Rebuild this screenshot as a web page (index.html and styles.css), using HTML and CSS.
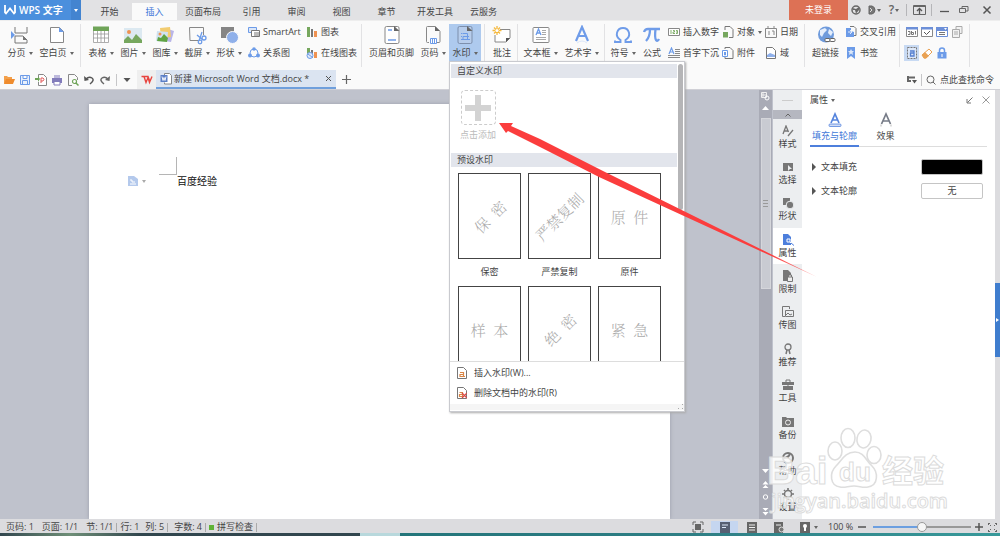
FILE: index.html
```
<!DOCTYPE html>
<html lang="zh-CN">
<head>
<meta charset="utf-8">
<title>WPS 文字</title>
<link rel="stylesheet" href="styles.css">
</head>
<body>
<div class="app">
  <header class="titlebar">
    <button class="brand">
      <svg width="12" height="10" viewBox="0 0 12 10"><path d="M1 0v7.500l1 1L6 3.500l4 5 1-1V0" fill="none" stroke="#fff" stroke-width="1.800"/></svg>
      <span class="brand-name">WPS 文字</span>
      <span class="brand-drop"><i class="caret"></i></span>
    </button>
    <nav class="tabs">
      <button class="tab">开始</button>
      <button class="tab active">插入</button>
      <button class="tab wide">页面布局</button>
      <button class="tab">引用</button>
      <button class="tab">审阅</button>
      <button class="tab">视图</button>
      <button class="tab">章节</button>
      <button class="tab wide">开发工具</button>
      <button class="tab">云服务</button>
    </nav>
    <div class="window-tools">
      <button class="login">未登录</button>
      <button class="wt" aria-label="皮肤"><svg width="10" height="10" viewBox="0 0 10 10"><circle cx="5" cy="5" r="4" fill="none" stroke="#666" stroke-width="1.500"/><path d="M1.500 3l3.500 1 3-2v3L5 8.500 4 5 2 5z" fill="#666"/></svg></button>
      <button class="wt" aria-label="文档"><svg width="8" height="10" viewBox="0 0 8 10"><path d="M1 1h3q3 1 3 4t-3 4H1z" fill="#777" stroke="#666"/><path d="M2 3l2 2-2 2" stroke="#ddd" fill="none"/></svg><i class="caret"></i></button>
      <button class="wt help">?<i class="caret"></i></button>
      <i class="bar"></i>
      <button class="wt" aria-label="收起功能区"><svg width="13" height="12" viewBox="0 0 13 12"><path d="M.5 10.500V1.500h12v9zM.5 2.500h12" fill="none" stroke="#666"/><path d="M6.500 10V5M4 7l2.500-2.500L9 7" fill="none" stroke="#555" stroke-width="1.300"/></svg></button>
      <i class="bar"></i>
      <button class="wt" aria-label="最小化"><svg width="10" height="10" viewBox="0 0 10 10"><path d="M1 6.500h9" stroke="#555" stroke-width="1.300"/></svg></button>
      <button class="wt" aria-label="还原"><svg width="10" height="10" viewBox="0 0 10 10"><path d="M.5 3.500h6v4h-6zM3 3V1.500h6V6H7" fill="none" stroke="#666"/></svg></button>
      <button class="wt close" aria-label="关闭"><svg width="10" height="10" viewBox="0 0 10 10"><path d="M1.500 1.500l7 7M8.500 1.500l-7 7" stroke="#555" stroke-width="1.500"/></svg></button>
    </div>
  </header>

  <section class="ribbon">
    <button class="big"><svg width="20" height="20" viewBox="0 0 20 20"><path d="M5 2v6h12V2M5 18v-7h8l4 4v3z" fill="none" stroke="#777"/><path d="M13 11v4h4z" fill="#777"/><path d="M1 6l4 4-4 4z" fill="#6c9be8"/></svg><span>分页<i class="caret"></i></span></button>
    <button class="big b3"><svg width="20" height="20" viewBox="0 0 20 20"><path d="M3.500 2.500h9l4 4v11h-13z" fill="#fff" stroke="#888"/><path d="M12 2l5 5h-5z" fill="#6c9be8"/></svg><span>空白页<i class="caret"></i></span></button>
    <i class="sep"></i>
    <button class="big"><svg width="20" height="20" viewBox="0 0 20 20"><path d="M2.500 5h15v12.500h-15zM2 9h16M2 13h16M6.500 5v12M10 5v12M13.500 5v12" fill="#fff" stroke="#999" stroke-width=".8"/><path d="M2 1.500h16V6H2z" fill="#6fa458"/></svg><span>表格<i class="caret"></i></span></button>
    <button class="big"><svg width="20" height="20" viewBox="0 0 20 20"><path d="M1 3h18v15H1z" fill="#dce9f1"/><circle cx="6" cy="7" r="2" fill="#ef9252"/><path d="M1 18v-3l4-4 4 4 4-6 6 6v3z" fill="#76a75e"/></svg><span>图片<i class="caret"></i></span></button>
    <button class="big"><svg width="20" height="20" viewBox="0 0 20 20"><path d="M13 4l6 2-3 11-6-1z" fill="#b9b5e8"/><path d="M5 3l10-1 1 10-10 1z" fill="#f2cc70"/><path d="M2 6l11 1-1 10-11-1z" fill="#cfe2f2"/><circle cx="5" cy="9" r="1.500" fill="#ef9252"/><path d="M2 16l1-4 3 1 3-4 4 4-1 4z" fill="#60a443"/></svg><span>图库<i class="caret"></i></span></button>
    <button class="big"><svg width="20" height="20" viewBox="0 0 20 20"><path d="M11 15.500H3L2.500 2.500h14V10" fill="none" stroke="#888"/><path d="M10 10l6 5M12 16l3-9" stroke="#6c9be8" stroke-width="1.300"/><circle cx="17" cy="13" r="2" fill="none" stroke="#6c9be8" stroke-width="1.300"/><circle cx="13" cy="17" r="1.800" fill="none" stroke="#6c9be8" stroke-width="1.300"/></svg><span>截屏<i class="caret"></i></span></button>
    <button class="big"><svg width="20" height="20" viewBox="0 0 20 20"><path d="M2 2h13v11H2z" fill="#858585"/><circle cx="13.500" cy="12.500" r="6" fill="#8fb0ea" stroke="#fafafa"/></svg><span>形状<i class="caret"></i></span></button>
    <div class="stack s-smart">
      <button><svg width="12" height="12" viewBox="0 0 12 12"><path d="M.5 1.500h8v5h-8z" fill="#dce7f8" stroke="#6c9be8"/><path d="M3.500 4.500h8v6h-8zM6 7h5M6 9h5" fill="#fff" stroke="#777"/></svg>SmartArt</button>
      <button><svg width="12" height="12" viewBox="0 0 12 12"><circle cx="6" cy="6" r="4" fill="none" stroke="#6c9be8"/><g fill="#6c9be8"><circle cx="6" cy="2" r="1.800"/><circle cx="2" cy="8.500" r="2"/><circle cx="10" cy="8.500" r="2"/></g></svg>关系图</button>
    </div>
    <div class="stack s-chart">
      <button><svg width="12" height="12" viewBox="0 0 12 12"><path d="M1 1h3v10H1z" fill="#76a75e"/><path d="M5 3h2v8H5z" fill="#777"/><path d="M8 5h3v6H8z" fill="#ef9252"/></svg>图表</button>
      <button><svg width="12" height="12" viewBox="0 0 12 12"><path d="M1 1h3v8H1z" fill="#76a75e"/><path d="M5 3h2v8H5z" fill="#777"/><path d="M8 5h3v6H8z" fill="#ef9252"/><circle cx="4" cy="8.500" r="3" fill="#dce7f8" stroke="#6c9be8"/><path d="M2 7l4 3" stroke="#6c9be8"/></svg>在线图表</button>
    </div>
    <i class="sep"></i>
    <button class="big b5"><svg width="20" height="20" viewBox="0 0 20 20"><rect x="3" y="1.500" width="14" height="17" rx="1.500" fill="#fff" stroke="#888"/><path d="M12 1l5.500 5H12z" fill="#666"/><path d="M6 5h4M6 15h8" stroke="#6c9be8" stroke-width="1.500"/></svg><span>页眉和页脚</span></button>
    <button class="big"><svg width="20" height="20" viewBox="0 0 20 20"><path d="M6 17.500H4.500q-1 0-1-1v-14q0-1 1-1H12l5 5v10q0 1-1 1h-2" fill="none" stroke="#888"/><path d="M12 1l5 5h-5z" fill="#666"/><path d="M7.500 13.500h6v5h-6zM9.500 14v4M11.500 14v4" fill="#fff" stroke="#6c9be8"/></svg><span>页码<i class="caret"></i></span></button>
    <button class="big on"><svg width="20" height="20" viewBox="0 0 20 20"><rect x="3" y="1.500" width="14" height="17" rx="1.500" fill="#b7cdec" stroke="#7d8fac"/><path d="M12 1l5.500 5H12z" fill="#666"/><path d="M7.500 8.500h5v6H8v-3h4M6 8.500h1M6 11.500h1M12 11.500h2M6 14.500h9" fill="none" stroke="#6c9be8"/></svg><span>水印<i class="caret"></i></span></button>
    <i class="sep"></i>
    <button class="big b2"><svg width="20" height="20" viewBox="0 0 20 20"><path d="M8 4.500h10V13l-4 4H3V10" fill="#fff" stroke="#888"/><path d="M18 13h-4v4z" fill="#555"/><path d="M5 1v9M.5 5.500h9M2 2.500l6 6M8 2.500l-6 6" stroke="#f5b93f" stroke-width="1.300"/><circle cx="5" cy="5.500" r="1.600" fill="#fff"/></svg><span>批注</span></button>
    <i class="sep tight"></i>
    <button class="big b3"><svg width="20" height="20" viewBox="0 0 20 20"><rect x="2" y="2.500" width="16" height="15" rx="1" fill="#fff" stroke="#888"/><path d="M5 10l2.500-6L10 10M6 8h3" fill="none" stroke="#6c9be8" stroke-width="1.300"/><path d="M11 5.500h4M11 7.500h4M11 9.500h4M5 12.500h10M5 14.500h10" stroke="#aaa"/></svg><span>文本框<i class="caret"></i></span></button>
    <button class="big b3"><svg width="20" height="20" viewBox="0 0 20 20"><path d="M4 16L10 2l6 14M6.500 11h7" fill="none" stroke="#6f9ce9" stroke-width="2.200"/><path d="M5 18q5-4 10 0" stroke="#dbe6f8" fill="none"/></svg><span>艺术字<i class="caret"></i></span></button>
    <i class="sep tight"></i>
    <button class="big"><svg width="20" height="20" viewBox="0 0 20 20"><path d="M2 15.500v1.500h5.500v-2C1 11 4 3 10 3s9 8 2.500 12v2H18v-1.500" fill="none" stroke="#6f9ce9" stroke-width="1.900"/></svg><span>符号<i class="caret"></i></span></button>
    <button class="big b2"><svg width="20" height="20" viewBox="0 0 20 20"><path d="M2 7q1-3 4-3h12M8 4q0 8-4 12M13.500 4q-1 9 .5 11t3-1" fill="none" stroke="#6f9ce9" stroke-width="2.300"/></svg><span>公式</span></button>
    <div class="stack s-num">
      <button><svg width="12" height="12" viewBox="0 0 12 12"><path d="M.5 2.500h11v7H.5z" fill="#fff" stroke="#888"/><path d="M3 4v4M5 4.500h1.500v1.500H5v1.500h2M8 4.500h1.500v3H8M8 6h1.500" fill="none" stroke="#76a75e" stroke-width=".9"/></svg>插入数字</button>
      <button><svg width="12" height="12" viewBox="0 0 12 12"><path d="M1 7l2.500-6L6 7M2 5h3" fill="none" stroke="#6c9be8" stroke-width="1.200"/><path d="M7 2.500h5M7 4.500h5M7 6.500h5M0 8.500h12M0 10.500h12" stroke="#888"/></svg>首字下沉</button>
    </div>
    <div class="stack s-obj">
      <button><svg width="12" height="12" viewBox="0 0 12 12"><path d="M3 4V.5h5l3 3v8H7" fill="none" stroke="#777"/><path d="M1 6h5v5.500H1z" fill="#76a75e"/></svg>对象<i class="caret"></i></button>
      <button><svg width="12" height="12" viewBox="0 0 12 12"><path d="M3 2V.5h5l3 3v8H3V10" fill="none" stroke="#777"/><path d="M.5 3.500h5v6h-5z" fill="#fff" stroke="#6c9be8"/><path d="M2.500 5v3h1V5" fill="none" stroke="#6c9be8"/></svg>附件</button>
    </div>
    <div class="stack s-date">
      <button><svg width="12" height="12" viewBox="0 0 12 12"><path d="M.5 2.500h11v9H.5zM3 0v3M9 0v3M4 5v4M7 5h2v4" fill="none" stroke="#888"/></svg>日期</button>
      <button><svg width="12" height="12" viewBox="0 0 12 12"><path d="M1.500.5h6l3 3v8h-9z" fill="#fff" stroke="#777"/><path d="M2 8l3-2 5 2v2H2z" fill="#8fb0ea"/></svg>域</button>
    </div>
    <i class="sep"></i>
    <button class="big b-link"><svg width="20" height="20" viewBox="0 0 20 20"><circle cx="10" cy="9.500" r="8" fill="#6f9bdc"/><path d="M4 5l5-2 2 2-3 3-2 4-2-2zM13 4l4 3-2 4-3-3z" fill="#e5eefb"/><rect x="9" y="13.500" width="5" height="3" rx="1" fill="#fff" stroke="#666"/><rect x="14" y="13.500" width="5" height="3" rx="1" fill="#fff" stroke="#666"/></svg><span>超链接</span></button>
    <div class="stack s-ref">
      <button><svg width="12" height="12" viewBox="0 0 12 12"><path d="M5 .5h4l2 2v7H8" fill="none" stroke="#777"/><path d="M1 2h5v3l3 1v5H1z" fill="#6c9be8"/><path d="M3 6h3M5 4l2 2-2 2" stroke="#fff" fill="none" stroke-width=".8"/></svg>交叉引用</button>
      <button><svg width="12" height="12" viewBox="0 0 12 12"><path d="M2 0h8v12L6 9l-4 3z" fill="#6c9be8"/><path d="M6 2l1 2h2L7.500 5.500 8 8 6 6.500 4 8l.5-2.500L3 4h2z" fill="#dce7f8"/></svg>书签</button>
    </div>
    <i class="sep"></i>
    <div class="controls">
      <button aria-label="文字型窗体域"><svg width="12" height="12" viewBox="0 0 12 12"><path d="M.5 1.500h11v9H.5z" fill="#fff" stroke="#888"/><path d="M0 1h12v2.500H0z" fill="#6c8fd8"/><path d="M2 5.500h2v3H2M5.500 5v3.500h2v-2h-2M9.500 5v3.500" fill="none" stroke="#777"/></svg></button>
      <button aria-label="复选框型窗体域"><svg width="12" height="12" viewBox="0 0 12 12"><path d="M.5 1.500h11v9H.5z" fill="#fff" stroke="#888"/><path d="M0 1h12v2.500H0z" fill="#6c8fd8"/><path d="M3 6l2.500 2.500L9 5" fill="none" stroke="#555"/></svg></button>
      <button aria-label="下拉型窗体域"><svg width="12" height="12" viewBox="0 0 12 12"><path d="M.5 1.500h11v9H.5z" fill="#fff" stroke="#6c8fd8"/><path d="M0 1h12v4H0z" fill="#6c8fd8"/><path d="M8 2h3L9.500 4z" fill="#fff"/><path d="M3 6.500h6M3 8.500h6" stroke="#777"/></svg></button>
      <button aria-label="窗体域选项"><svg width="12" height="12" viewBox="0 0 12 12"><path d="M1.500 3.500h7v8h-7zM5 3V.5h6v7H9M3 6h4M3 8h4" fill="#f2f2f2" stroke="#aaa"/></svg></button>
      <button class="on" aria-label="窗体域底纹"><svg width="12" height="12" viewBox="0 0 12 12"><path d="M1.500.5h9v11h-9z" fill="#dce7f8" stroke="#777" stroke-dasharray="2 1"/><path d="M4 4h4v5H4.500V6H8" fill="none" stroke="#5680d0" stroke-width="1.300"/></svg></button>
      <button aria-label="重新设置窗体域"><svg width="12" height="12" viewBox="0 0 12 12"><path d="M1 8l7-6 3 3-6 6H3z" fill="#fff" stroke="#e9a153"/><path d="M1 8l3-3 4 4-3 2.500H3z" fill="#e9a153"/></svg></button>
      <button aria-label="保护窗体"><svg width="12" height="12" viewBox="0 0 12 12"><path d="M3.500 6V3.500q0-2.500 2.500-2.500t2.500 2.500V6" fill="none" stroke="#6c9be8" stroke-width="1.500"/><path d="M1.500 5h9v6.500h-9z" fill="#6c9be8"/><path d="M6 7v3" stroke="#fff"/></svg></button>
    </div>
    <i class="sep"></i>
  </section>

  <section class="quickbar">
    <div class="quick">
      <button aria-label="打开"><svg width="12" height="12" viewBox="0 0 12 12"><path d="M1 10V2h3l1 1h4v2" fill="#f3a04b"/><path d="M3 5h9l-2 5H1z" fill="#ef8c2e"/></svg></button>
      <button aria-label="保存"><svg width="12" height="12" viewBox="0 0 12 12"><path d="M1.500 1.500h9v9h-9zM4 1.500v3h4v-3M3.500 10.500v-4h5v4" fill="#e8f0fc" stroke="#6c9be8"/></svg></button>
      <button aria-label="输出为PDF"><svg width="12" height="12" viewBox="0 0 12 12"><path d="M3.500 5V.5h5l3 3v8h-8V8" fill="#fff" stroke="#888"/><path d="M6 9V4h2q2 1 0 3H6" fill="none" stroke="#e25b5b"/><path d="M0 4h3V2l2 3-2 3V6H0z" fill="#6fa458"/></svg></button>
      <button aria-label="打印"><svg width="12" height="12" viewBox="0 0 12 12"><path d="M3 1h6v3H3z" fill="#bdb9dc"/><path d="M1 4h10v5H1z" fill="#837dbb"/><path d="M3 7.500h6v3.500H3z" fill="#fff" stroke="#837dbb"/></svg></button>
      <button aria-label="打印预览"><svg width="12" height="12" viewBox="0 0 12 12"><path d="M5 11.500H1.500V.5h6l3 3V6" fill="none" stroke="#888"/><circle cx="7.500" cy="7.500" r="2" fill="#fff" stroke="#6fa458" stroke-width="1.200"/><path d="M9 9l2.500 2.500" stroke="#6fa458" stroke-width="1.500"/></svg></button>
      <button aria-label="撤销"><svg width="12" height="12" viewBox="0 0 12 12"><path d="M3 5q3-3 6-1t-2 6" fill="none" stroke="#555" stroke-width="1.500"/><path d="M1 2l.5 5L6 6z" fill="#555"/></svg></button>
      <button aria-label="恢复"><svg width="12" height="12" viewBox="0 0 12 12"><path d="M9 5Q6 2 3 4t2 6" fill="none" stroke="#666" stroke-width="1.500"/><path d="M11 2l-.5 5L6 6z" fill="#666"/></svg></button>
    </div>
    <i class="bar"></i>
    <button class="more" aria-label="更多"><svg width="8" height="6" viewBox="0 0 8 6"><path d="M.5 1h7L4 5z" fill="#555"/></svg></button>
    <button class="home" aria-label="首页"><svg width="12" height="10" viewBox="0 0 12 10"><path d="M.5 1.500h2.500l2 6 2-5 1.500 5 2.500-6M3 1.500h4L9 7" fill="none" stroke="#e8453f" stroke-width="1.400"/></svg></button>
    <div class="doctab">
      <svg width="12" height="12" viewBox="0 0 12 12"><path d="M4.500 2V.5h5l2 2v8.500h-7V9.500" fill="#fff" stroke="#888"/><path d="M.5 2h7v7h-7z" fill="#5b7fc7"/><path d="M2 3.500l1 4 1-3 1 3 1-4" fill="none" stroke="#fff" stroke-width=".9"/></svg>
      <span class="docname">新建 Microsoft Word 文档.docx *</span>
      <button aria-label="关闭文档"><svg width="7" height="7" viewBox="0 0 7 7"><path d="M1 1l5 5M6 1L1 6" stroke="#555"/></svg></button>
    </div>
    <button class="add" aria-label="新建"><svg width="9" height="9" viewBox="0 0 9 9"><path d="M4.500 0v9M0 4.500h9" stroke="#666" stroke-width="1.200"/></svg></button>
    <div class="find">
      <button aria-label="折叠"><svg width="10" height="8" viewBox="0 0 10 8"><path d="M1 0v5h3M1 1.500h7" fill="none" stroke="#666" stroke-width="2"/><path d="M5 4h5L7.500 7.500z" fill="#555"/></svg></button>
      <i class="bar"></i>
      <button class="find-btn"><svg width="10" height="10" viewBox="0 0 10 10"><circle cx="4.500" cy="4.500" r="3.500" fill="none" stroke="#666"/><path d="M7 7l2.500 2.500" stroke="#666"/></svg>点此查找命令</button>
    </div>
  </section>

  <main class="workspace">
    <div class="canvas">
      <article class="page">
        <button class="para-tool" aria-label="段落布局"><svg width="10" height="10" viewBox="0 0 10 10"><path d="M0 0h6l4 3v7H0z" fill="#b4c9ec"/><path d="M2 4h2v2h3M2 8h6" stroke="#fff" fill="none"/></svg><i class="caret"></i></button>
        <div class="body-text"><i class="corner"></i><p>百度经验</p></div>
      </article>
    </div>
    <div class="vscroll">
      <svg width="9" height="9" viewBox="0 0 9 9"><path d="M.5.500h5v5h-5zM2 0v5M0 3h6" fill="none" stroke="#eee"/><circle cx="6" cy="6" r="2" fill="none" stroke="#fff"/></svg>
      <svg class="up" width="7" height="4" viewBox="0 0 7 4"><path d="M0 4l3.500-4L7 4z" fill="#fff"/></svg>
      <div class="track"><div class="thumb"><i></i><i></i><i></i></div></div>
      <svg width="9" height="52" viewBox="0 0 9 52"><path d="M1 2h7L4.500 6zM4.500 14l3 3.500h-6zM4.500 18l3 3h-6zM1.500 41h6l-3 3zM1.500 45h6l-3 3.500z" fill="#fff"/><circle cx="4.500" cy="30" r="2.200" fill="none" stroke="#fff"/></svg>
    </div>
    <aside class="rail">
      <div class="handle"><i></i></div>
      <button class="rail-up" aria-label="向上"><svg width="6" height="4" viewBox="0 0 6 4"><path d="M.5 3.500L3 1l2.500 2.500" fill="none" stroke="#666"/></svg></button>
      <button class="ri"><svg width="12" height="12" viewBox="0 0 12 12"><path d="M1 9l3-8 2.500 6M2 6h4M6 11l5-6" fill="none" stroke="#777" stroke-width="1.300"/></svg>样式</button>
      <button class="ri"><svg width="12" height="12" viewBox="0 0 12 12"><path d="M1 2h10v8H1z" fill="#777"/><path d="M6 4l4 4H8l-2 2z" fill="#eceef0"/></svg>选择</button>
      <button class="ri"><svg width="12" height="12" viewBox="0 0 12 12"><path d="M1 1h7v7H1z" fill="#777"/><circle cx="8" cy="8" r="3.800" fill="#777" stroke="#eceef0"/></svg>形状</button>
      <button class="ri on"><svg width="12" height="12" viewBox="0 0 12 12"><path d="M1 0h5l3 3v8H1z" fill="#4d7fdc"/><path d="M5 5h3v3H5zM8 8l3 3" fill="none" stroke="#fff"/><path d="M9 9l3 2.500" stroke="#4d7fdc"/></svg>属性</button>
      <button class="ri"><svg width="12" height="12" viewBox="0 0 12 12"><path d="M1 0h5l3 3v8H1z" fill="#777"/><path d="M5.500 7h5v4.500h-5zM6.500 7V5h3v2" fill="#eee" stroke="#777"/></svg>限制</button>
      <button class="ri"><svg width="12" height="12" viewBox="0 0 12 12"><path d="M3 10.500H.5V.5h7V3M3.500 4.500h8v6h-8zM4 9l2-2 2 2 2-1" fill="none" stroke="#777"/></svg>传图</button>
      <button class="ri"><svg width="12" height="12" viewBox="0 0 12 12"><circle cx="6" cy="4" r="3" fill="none" stroke="#777" stroke-width="1.300"/><path d="M5 7l-1 4M7 7l1 4" stroke="#777" stroke-width="1.500"/></svg>推荐</button>
      <button class="ri"><svg width="12" height="12" viewBox="0 0 12 12"><path d="M0 3h12v3H0zM1 7h10v4H1z" fill="#777"/><path d="M4 3V1h4v2M6 5v3" fill="none" stroke="#777"/></svg>工具</button>
      <button class="ri"><svg width="12" height="12" viewBox="0 0 12 12"><path d="M0 1h4l1 1h7v9H0z" fill="#777"/><circle cx="6" cy="6.500" r="2.500" fill="none" stroke="#eee"/></svg>备份</button>
      <button class="ri"><svg width="12" height="12" viewBox="0 0 12 12"><circle cx="6" cy="6" r="5" fill="none" stroke="#777" stroke-width="2"/><path d="M2 6q4 0 6-4" fill="none" stroke="#777" stroke-width="2"/></svg>帮助</button>
      <button class="ri"><svg width="12" height="12" viewBox="0 0 12 12"><circle cx="6" cy="6" r="3.500" fill="none" stroke="#777" stroke-width="1.500"/><path d="M6 0v2M6 10v2M0 6h2M10 6h2M2 2l1 1M9 9l1 1M10 2L9 3M2 10l1-1" stroke="#777" stroke-width="1.600"/></svg>设置</button>
    </aside>
    <aside class="panel">
      <div class="panel-head">
        <button>属性<i class="caret"></i></button>
        <button class="dock" aria-label="停靠"><svg width="7" height="7" viewBox="0 0 7 7"><path d="M6.500.5l-5 5M1 2v4h4" fill="none" stroke="#777"/></svg></button>
        <button aria-label="关闭"><svg width="8" height="8" viewBox="0 0 8 8"><path d="M.5.500l7 7M7.500.5l-7 7" stroke="#999"/></svg></button>
      </div>
      <div class="panel-tabs">
        <button class="ptab on"><svg width="16" height="16" viewBox="0 0 16 16"><path d="M4 11l4-9 4 9M5.500 8h5" fill="none" stroke="#5584dd" stroke-width="1.700"/><rect x="2" y="12" width="12" height="2.500" rx="1" fill="#cfdcf6" stroke="#5584dd" stroke-width=".8"/></svg>填充与轮廓</button>
        <button class="ptab"><svg width="16" height="16" viewBox="0 0 16 16"><path d="M3.500 12L8 2l4.500 10M5.500 9h5" fill="none" stroke="#777c88" stroke-width="1.700"/><path d="M3 12.500v2M13 12.500v2" stroke="#bbb"/></svg>效果</button>
      </div>
      <div class="prop"><button class="fold"><svg width="4" height="8" viewBox="0 0 4 8"><path d="M0 0l4 4-4 4z" fill="#555"/></svg>文本填充</button><button class="swatch black" aria-label="填充颜色"></button></div>
      <div class="prop"><button class="fold"><svg width="4" height="8" viewBox="0 0 4 8"><path d="M0 0l4 4-4 4z" fill="#555"/></svg>文本轮廓</button><button class="swatch">无</button></div>
    </aside>
    <div class="edge"><button aria-label="展开"><svg width="3" height="4" viewBox="0 0 3 4"><path d="M0 0l3 2-3 2z" fill="#fff"/></svg></button></div>
  </main>

  <footer class="status">
    <span class="st1">页码: 1</span><span class="st1">页面: 1/1</span><span>节: 1/1</span><i class="bar"></i>
    <span class="st2">行: 1</span><span>列: 5</span><i class="bar"></i>
    <span class="st3">字数: 4</span><i class="bar"></i>
    <button class="spell"><i></i>拼写检查</button><i class="bar"></i>
    <div class="views">
      <button aria-label="全屏"><svg width="12" height="12" viewBox="0 0 12 12"><path d="M3 3h6v6H3z" fill="#666"/><path d="M1 4V1h3M8 1h3v3M11 8v3H8M4 11H1V8" fill="none" stroke="#666"/></svg></button>
      <button class="on" aria-label="页面视图"><svg width="12" height="12" viewBox="0 0 12 12"><path d="M1 1h10v11H1z" fill="#566073"/><path d="M3 4h6M3 6.500h4" stroke="#dce7f8"/></svg></button>
      <button aria-label="大纲"><svg width="12" height="12" viewBox="0 0 12 12"><path d="M1 1h10v11H1z" fill="#666"/><path d="M3 4h6M3 6.500h6M3 9h6" stroke="#eee"/></svg></button>
      <button aria-label="网页视图"><svg width="12" height="12" viewBox="0 0 12 12"><path d="M1 1h9v11H1z" fill="#666"/><path d="M3 4h5" stroke="#eee"/><circle cx="8.500" cy="8.500" r="2.500" fill="#777" stroke="#ddd"/></svg></button>
      <button aria-label="护眼模式"><svg width="12" height="12" viewBox="0 0 12 12"><path d="M1 1h10v11H1z" fill="#666"/><circle cx="6" cy="5" r="2" fill="#fff"/><path d="M6 6v4" stroke="#fff" stroke-width="2"/></svg><i class="caret"></i></button>
    </div>
    <span class="zoomval">100 %</span>
    <button aria-label="缩小"><svg width="8" height="8" viewBox="0 0 8 8"><path d="M0 4h8" stroke="#555" stroke-width="1.500"/></svg></button>
    <input class="zoom" type="range" min="0" max="200" value="100" aria-label="缩放">
    <button aria-label="放大"><svg width="8" height="8" viewBox="0 0 8 8"><path d="M0 4h8M4 0v8" stroke="#555" stroke-width="1.500"/></svg></button>
    <button class="fit" aria-label="适应窗口"><svg width="9" height="9" viewBox="0 0 9 9"><path d="M0 .500h2M7 .500h2M0 8.500h2M7 8.500h2M.5 0v2M8.500 0v2M.5 7v2M8.500 7v2M2 2l1 1M7 2L6 3M2 7l1-1M7 7L6 6" stroke="#666"/></svg></button>
  </footer>
  <div class="taskbar"></div>

  <section class="menu">
    <div class="menu-scroll">
      <div class="menu-list">
        <h2>自定义水印</h2>
        <button class="custom"><span class="plus"><svg width="26" height="26" viewBox="0 0 26 26"><path d="M13 0v26M0 13h26" stroke="#d3d3d3" stroke-width="6"/></svg></span>点击添加</button>
        <h2>预设水印</h2>
        <div class="presets">
          <button class="preset"><span class="sheet"><b class="tilt">保&nbsp; 密</b></span>保密</button>
          <button class="preset"><span class="sheet"><b class="tilt">严禁复制</b></span>严禁复制</button>
          <button class="preset"><span class="sheet"><b>原&nbsp; 件</b></span>原件</button>
          <button class="preset"><span class="sheet"><b>样&nbsp; 本</b></span></button>
          <button class="preset"><span class="sheet"><b class="tilt">绝&nbsp; 密</b></span></button>
          <button class="preset"><span class="sheet"><b>紧&nbsp; 急</b></span></button>
        </div>
      </div>
      <div class="menu-bar"></div>
    </div>
    <div class="menu-actions">
      <button><svg width="10" height="12" viewBox="0 0 10 12"><path d="M.5.500h6l3 3v8h-9z" fill="#fff" stroke="#777"/><path d="M3 5.500h3.500v4H3v-2h3.500M7 9.500h1" fill="none" stroke="#d98648" stroke-width="1.200"/></svg>插入水印(W)...</button>
      <button><svg width="10" height="12" viewBox="0 0 10 12"><path d="M.5.500h6l3 3v8h-9z" fill="#fff" stroke="#777"/><path d="M2.500 5.500h3v4h-3v-2h3" fill="none" stroke="#d98648" stroke-width="1.200"/><path d="M5 6l5 5M10 6l-5 5" stroke="#d94848" stroke-width="1.200"/></svg>删除文档中的水印(R)</button>
    </div>
    <div class="menu-foot"><svg width="6" height="6" viewBox="0 0 6 6"><path d="M4 0h1v1H4zM4 4h1v1H4zM0 4h1v1H0z" fill="#aaa"/></svg></div>
  </section>

  <svg class="pointer" width="320" height="157" viewBox="0 0 320 157"><defs><linearGradient id="fade"><stop offset=".85" stop-color="#fb3d3d"/><stop offset="1" stop-color="#fb3d3d" stop-opacity=".5"/></linearGradient></defs><path d="M0 1L14 1l-2 3L41 17l63 32 214 106L100 55 41 25 9 9 7 11z" fill="url(#fade)"/></svg>

  <svg class="mark" width="184" height="92" viewBox="0 0 184 92">
    <g fill="#fff" fill-opacity=".8" stroke="#dedede" stroke-width="1.600">
      <ellipse cx="68" cy="26" rx="7" ry="9"/><ellipse cx="81" cy="13" rx="7" ry="9.500"/><ellipse cx="97" cy="14" rx="7" ry="9" transform="rotate(12 97 14)"/><ellipse cx="107" cy="30" rx="7" ry="8.500"/>
      <path d="M88 27c9 0 11 9 17 14 6 6 7 19-4 21-6 1-8-1-14-1s-9 2-14 1c-10-1-11-14-4-21 6-6 9-14 19-14z"/>
    </g>
    <g class="mark-text">
      <text class="m-bai" x="0" y="59">Bai</text>
      <text class="m-du" x="72" y="56">du</text>
      <text class="m-cn" x="115" y="57">经验</text>
      <text class="m-url" x="4" y="83">jingyan.baidu.com</text>
    </g>
  </svg>
</div>
</body>
</html>
```

FILE: styles.css
```
* { box-sizing: border-box; }

body {
  margin: 0;
  font: 9px/12px "Open Sans", "Noto Sans CJK SC", sans-serif;
  color: #444;
}

button {
  margin: 0;
  padding: 0;
  border: 0;
  background: none;
  font: inherit;
  color: inherit;
  white-space: nowrap;
  display: flex;
  align-items: center;
  justify-content: center;
}

svg { display: block; flex: none; }

.app {
  position: relative;
  display: flex;
  flex-direction: column;
  height: 100vh;
  overflow: hidden;
  background: #fafafa;
}

.caret {
  display: inline-block;
  border: 2px solid transparent;
  border-top: 3px solid #666;
  border-bottom: 0;
  margin-left: 3px;
  vertical-align: middle;
}

.bar { width: 1px; height: 12px; background: #c6c6c8; flex: none; }

/* title bar */
.titlebar { display: flex; height: 20px; background: #e2e2e4; flex: none; }
.brand { background: #4b8fdd; color: #fff; width: 81px; padding-left: 4px; justify-content: flex-start; font-size: 10px; font-weight: 600; gap: 3px; }
.brand-name { flex: 1; text-align: left; }
.brand-drop { width: 10px; height: 20px; background: #4384d0; display: flex; align-items: center; justify-content: center; }
.brand-drop .caret { margin: 0; border-top-color: #fff; }
.tabs { display: flex; padding-left: 6px; }
.tab { width: 45px; padding-top: 4px; }
.tab.wide { width: 52px; }
.tab.active { background: #fafafa; color: #3f78d8; margin-top: 3px; padding-top: 0; }
.window-tools { display: flex; align-items: center; margin-left: auto; }
.login { background: #dd7155; color: #fff; width: 59px; height: 20px; }
.wt { width: 20px; height: 20px; }
.wt .caret { margin-left: 1px; }
.login + .wt { width: 16px; }
.wt.close { width: 26px; }
.wt.help { font-size: 12px; font-weight: 600; color: #666; }
.window-tools .bar { margin: 0 2px; background: #b5b5b8; }

/* ribbon */
.ribbon { display: flex; height: 50px; padding: 3px 4px 3px; flex: none; align-items: flex-start; border-top: 1px solid #eee; }
.big { flex-direction: column; width: 32px; height: 38px; padding-top: 1px; gap: 2px; justify-content: flex-start; }
.big.b2 { width: 26px; }
.big.b3 { width: 41px; }
.big.b5 { width: 51px; }
.big.b-link { width: 33px; }
.big.on { background: #aecaee; }
.sep { width: 1px; height: 43px; background: #e2e2e4; margin: 0 4px 0 3px; flex: none; }
.sep.tight { margin: 0 2px; }
.stack { display: flex; flex-direction: column; gap: 5px; padding-left: 3px; }
.stack button { height: 16px; gap: 3px; justify-content: flex-start; }
.stack .caret { margin-left: 0; }
.s-smart { width: 58px; }
.s-chart { width: 55px; }
.s-num { width: 54px; }
.s-obj { width: 43px; }
.s-date { width: 39px; }
.s-ref { width: 54px; }
.controls { display: grid; grid-template-columns: repeat(4, 15px); row-gap: 5px; width: 62px; }
.controls button { height: 16px; width: 15px; }
.controls .on { background: #c8daf3; }

/* quick access and document tabs */
.quickbar { display: flex; height: 20px; align-items: center; flex: none; border-bottom: 1px solid #d0d0d6; }
.quick { display: flex; gap: 4px; padding: 0 5px 0 3px; }
.more { width: 20px; height: 19px; }
.home { width: 19px; height: 19px; background: #efefef; }
.doctab { display: flex; align-items: center; width: 180px; height: 19px; padding: 0 4px; gap: 2px; background: #dbe4f1; border-bottom: 2px solid #6f9fdc; }
.docname { flex: 1; white-space: nowrap; }
.add { width: 20px; height: 19px; }
.find { display: flex; align-items: center; gap: 4px; margin-left: auto; padding-right: 6px; }
.find-btn { gap: 4px; }

/* document area */
.workspace { display: flex; flex: 1; min-height: 0; }
.canvas { flex: 1; background: #bfc2cc; padding: 14px 89px 0; display: flex; }
.page { flex: 1; background: #fff; box-shadow: 0 0 4px #9a9daa; display: flex; align-items: flex-start; padding: 53px 0 0 39px; }
.para-tool { margin-top: 19px; width: 20px; justify-content: flex-start; }
.para-tool .caret { border-top-color: #aaa; margin-left: 4px; }
.body-text { padding-left: 11px; }
.corner { display: block; width: 18px; height: 18px; border: solid #b5b5b5; border-width: 0 1px 1px 0; }
.body-text p { margin: 0 0 0 18px; font-size: 10px; line-height: 13px; color: #111; }

.vscroll { width: 14px; background: #a9abb6; display: flex; flex-direction: column; align-items: center; padding-top: 2px; flex: none; border-right: 1px solid #bfc2cc; }
.up { margin: 5px 0 8px; }
.track { flex: 1; width: 10px; min-height: 0; }
.thumb { height: 49%; background: #c9cbd2; border: 1px solid #d5d6db; display: flex; flex-direction: column; align-items: center; justify-content: center; gap: 2px; }
.thumb i { width: 5px; height: 1px; background: #999; }

.rail { width: 29px; background: #eceef0; display: flex; flex-direction: column; flex: none; }
.handle { height: 20px; display: flex; align-items: center; justify-content: center; }
.handle i { width: 11px; height: 1px; background: #ccc; }
.rail-up { height: 9px; background: #b5b7c0; width: 100%; }
.ri { flex: 1; flex-direction: column; gap: 1px; width: 100%; min-height: 0; }
.ri.on { background: #fff; }

.panel { width: 193px; background: #fff; padding: 4px 8px; flex: none; }
.panel-head { display: flex; align-items: center; padding-right: 0; }
.panel-head button:last-child { margin-right: -3px; }
.dock { margin: 0 9px 0 auto; }
.panel-tabs { display: flex; border-bottom: 1px solid #ddd; gap: 2px; margin-top: 6px; }
.ptab { flex-direction: column; width: 49px; height: 35px; gap: 2px; justify-content: flex-start; margin-bottom: -1px; }
.ptab.on { color: #3f78d8; border-bottom: 2px solid #4d7fdc; }
.prop { display: flex; justify-content: space-between; align-items: center; padding: 0 4px 0 2px; margin-top: 8px; }
.panel-tabs + .prop { margin-top: 12px; }
.fold { gap: 5px; }
.swatch { width: 62px; height: 16px; border: 1px solid #c5c5c5; border-radius: 2px; }
.swatch.black { background: #000; }
.edge { width: 5px; background: #dcdcdf; display: flex; align-items: center; padding-bottom: 0; flex: none; padding-top: 31px; }
.edge button { width: 5px; height: 74px; background: #3f7dce; }

/* status bar */
.status { display: flex; align-items: center; height: 14px; padding: 2px 3px 0 6px; background: #dcdcdf; flex: none; white-space: nowrap; }
.status .bar { height: 9px; margin: 0 3px; background: #aaa; }
.st1 { margin-right: 8px; }
.st2 { margin-right: 6px; }
.st3 { margin-left: 3px; }
.spell { gap: 3px; }
.spell i { width: 5px; height: 5px; background: #5fb336; }
.views { display: flex; margin-left: auto; }
.views button { width: 27px; height: 12px; }
.views .on { background: #c5d6f0; }
.views button:last-child { padding-left: 5px; }
.zoomval { width: 39px; padding-left: 9px; }
.zoom { appearance: none; width: 98px; height: 10px; margin: 0 4px 0 7px; background: linear-gradient(to right, #6c9fe0 50%, #999 50%) center / 100% 2px no-repeat; }
.zoom::-webkit-slider-thumb { appearance: none; width: 10px; height: 10px; border-radius: 50%; background: #f6f6f6; border: 1px solid #999; }
.fit { margin-left: 5px; }
.taskbar { height: 3px; flex: none; background: linear-gradient(to right, #31464e 0, #6f8f78 7%, #31464e 14%, #31464e 36%, #b8d8dc 36%, #b8d8dc 40%, #23757a 40%, #2f7f85 70%, #38999a 100%); }

/* watermark menu, dropped over the document */
.menu { position: absolute; left: 449px; top: 61px; width: 236px; background: #fff; border: 1px solid #c9cacf; box-shadow: 1px 1px 2px #aaa; }
.menu-scroll { display: flex; height: 299px; padding: 2px 1px 0; overflow: hidden; }
.menu-list { flex: 1; }
.menu h2 { margin: 0; padding: 0 6px 1px; font: inherit; line-height: 13px; background: #e2e5ec; }
.menu-bar { width: 5px; height: 146px; margin-left: 1px; background: #b5b5b7; border-radius: 3px; }
.custom { flex-direction: column; gap: 4px; color: #bbb; margin: 12px 0 12px 9px; }
.plus { display: flex; align-items: center; justify-content: center; width: 35px; height: 35px; border: 1px dashed #ccc; border-radius: 4px; }
.presets { display: grid; grid-template-columns: repeat(3, 63px); column-gap: 7px; row-gap: 8px; padding: 6px 0 0 7px; }
.preset { flex-direction: column; gap: 7px; justify-content: flex-start; }
.sheet { display: flex; align-items: center; justify-content: center; width: 63px; height: 86px; border: 1px solid #444; }
.sheet b { font: 15px "Noto Serif CJK SC", "Liberation Serif", "Noto Sans CJK SC", serif; font-weight: 300; color: #aaa; }
.sheet .tilt { transform: rotate(-45deg); }
.menu-actions { border-top: 1px solid #ddd; padding: 1px 7px 0; }
.menu-actions button { height: 20px; gap: 7px; }
.menu-foot { height: 6px; background: #f5f5f5; display: flex; justify-content: flex-end; margin: 1px 0; }

/* drawn over the window */
.pointer { position: absolute; left: 499px; top: 122px; pointer-events: none; }
.mark { position: absolute; left: 767px; top: 425px; pointer-events: none; }
.mark-text { font-family: "Liberation Sans", "Noto Sans CJK SC", sans-serif; font-weight: 700; fill: #fff; fill-opacity: .8; stroke: #dcdcdc; stroke-width: 1px; }
.m-bai { font-size: 39px; }
.m-du { font-size: 26px; }
.m-cn { font-size: 31px; }
.m-url { font-family: "Open Sans", sans-serif; font-size: 20px; font-weight: 600; }
```
